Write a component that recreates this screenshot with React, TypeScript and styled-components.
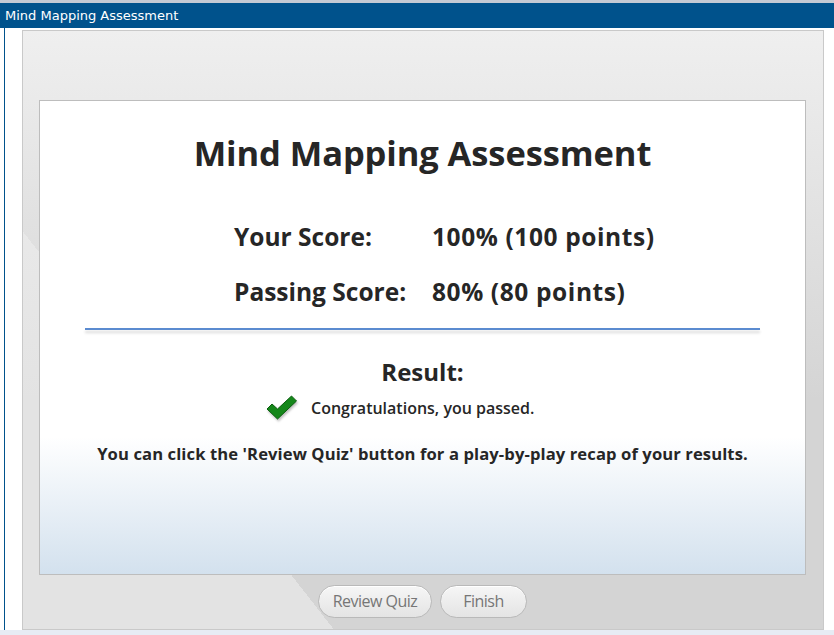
import styled, { createGlobalStyle } from 'styled-components';

const GlobalStyle = createGlobalStyle`
  html, body {
    margin: 0;
    padding: 0;
    background: #ffffff;
  }
  body {
    font-family: "Open Sans", "Noto Sans", sans-serif;
    color: #262626;
  }
`;

const Window = styled.div`
  width: 834px;
  height: 635px;
  display: flex;
  flex-direction: column;
  overflow: hidden;
`;

const TopRule = styled.div`
  height: 3px;
  background: #c4cad4;
`;

const TitleBar = styled.div`
  height: 25px;
  background: #00528c;
  color: #ffffff;
  font-family: "DejaVu Sans", Verdana, sans-serif;
  font-size: 13px;
  display: flex;
  align-items: center;
  padding-left: 5px;
`;

const Body = styled.div`
  flex: 1;
  margin-left: 4px;
  border-left: 1px solid #00528c;
  padding: 2px 10px 0 17px;
  display: flex;
`;

const BottomStrip = styled.div`
  height: 5px;
  background: #e7ecf4;
`;

const Panel = styled.div`
  width: 802px;
  height: 600px;
  box-sizing: border-box;
  border: 1px solid #c9c9c9;
  background:
    linear-gradient(to bottom, #efefef 0%, rgba(237, 237, 237, 0) 62%),
    linear-gradient(52deg, #e3e3e3 24.5%, #d4d4d4 24.5%);
  padding: 69px 17px 0 16px;
  display: flex;
  flex-direction: column;
`;

const Card = styled.div`
  height: 475px;
  box-sizing: border-box;
  border: 1px solid #bdbdbd;
  background: linear-gradient(to bottom, #ffffff 0%, #ffffff 71%, #d3e1ee 100%);
  display: flex;
  flex-direction: column;
  align-items: center;
`;

const Heading = styled.h1`
  margin: 30px 0 0;
  font-size: 34.5px;
  font-weight: 700;
  line-height: 44px;
  letter-spacing: -0.1px;
`;

const ScoreTable = styled.div`
  align-self: flex-start;
  margin: 45px 0 0 194px;
  display: grid;
  grid-template-columns: 198px auto;
  row-gap: 21px;
  font-size: 24.5px;
  font-weight: 700;
  line-height: 34px;
`;

const Value = styled.span`
  letter-spacing: 0.6px;
`;

const Divider = styled.div`
  align-self: stretch;
  margin: 19px 45px 0;
  height: 2px;
  background: #5b8bd0;
  box-shadow: 0 3px 3px rgba(0, 0, 0, 0.16);
`;

const ResultTitle = styled.h2`
  margin: 26px 0 0;
  font-size: 24px;
  font-weight: 700;
  line-height: 32px;
`;

const PassRow = styled.div`
  align-self: flex-start;
  margin: 6px 0 0 226px;
  display: flex;
  align-items: center;
  gap: 13px;
  font-size: 16px;
  font-weight: 600;
`;

const Hint = styled.p`
  margin: 20px 0 0;
  font-size: 16.6px;
  font-weight: 700;
  letter-spacing: 0.1px;
`;

const ButtonBar = styled.div`
  flex: 1;
  display: flex;
  justify-content: center;
  align-items: center;
  gap: 8px;
  padding-bottom: 2px;
`;

const PillButton = styled.button<{ w: number }>`
  width: ${p => p.w}px;
  height: 33px;
  border: 1px solid #b9b9b9;
  border-radius: 17px;
  background: linear-gradient(to bottom, #f6f6f6, #e4e4e4);
  box-shadow: inset 0 1px 0 #ffffff;
  color: #767676;
  font-family: "Open Sans", "Noto Sans", sans-serif;
  font-size: 16px;
  letter-spacing: -0.5px;
  padding: 0;
  cursor: default;
`;

const CheckIcon = () => (
  <svg width="32" height="28" viewBox="0 0 32 28" style={{ filter: 'drop-shadow(1px 2px 1px rgba(0,0,0,0.25))' }}>
    <path d="M1 15 L6 10 L11.5 15 L25.5 2 L30.5 7 L11.5 25 Z" fill="#15871a" stroke="#0b5e10" strokeWidth="1" strokeLinejoin="round" />
  </svg>
);

export default function App() {
  return (
    <>
      <GlobalStyle />
      <Window>
        <TopRule />
        <TitleBar>Mind Mapping Assessment</TitleBar>
        <Body>
          <Panel>
            <Card>
              <Heading>Mind Mapping Assessment</Heading>
              <ScoreTable>
                <span>Your Score:</span>
                <Value>100% (100 points)</Value>
                <span>Passing Score:</span>
                <Value>80% (80 points)</Value>
              </ScoreTable>
              <Divider />
              <ResultTitle>Result:</ResultTitle>
              <PassRow>
                <CheckIcon />
                <span>Congratulations, you passed.</span>
              </PassRow>
              <Hint>You can click the 'Review Quiz' button for a play-by-play recap of your results.</Hint>
            </Card>
            <ButtonBar>
              <PillButton w={114}>Review Quiz</PillButton>
              <PillButton w={87}>Finish</PillButton>
            </ButtonBar>
          </Panel>
        </Body>
        <BottomStrip />
      </Window>
    </>
  );
}
